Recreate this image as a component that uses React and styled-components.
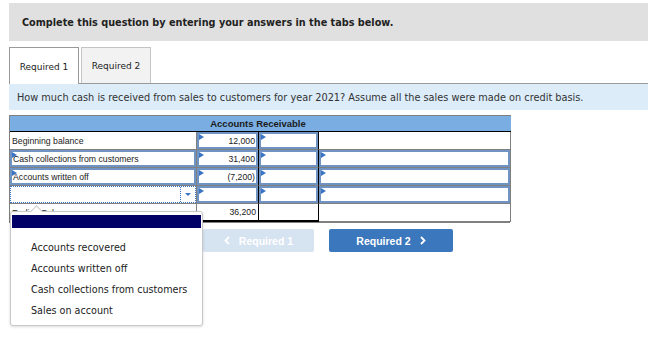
import React from 'react';
import styled, { createGlobalStyle } from 'styled-components';

const Global = createGlobalStyle`
  html, body { margin: 0; padding: 0; background: #fff; }
  body { width: 660px; height: 337px; overflow: hidden; }
`;

const Page = styled.div`
  position: relative;
  padding: 3px 12px 0 9px;
  font-family: 'DejaVu Sans', Verdana, sans-serif;
`;

const Banner = styled.div`
  height: 38px;
  background: #e0e0e0;
  display: flex;
  align-items: center;
  padding-left: 13px;
  font-size: 9.7px;
  font-weight: bold;
  color: #222;
`;

const TabBar = styled.div`
  margin-top: 6px;
  display: flex;
  gap: 2px;
  height: 36px;
  border-bottom: 1px solid #9a9a9a;
`;

const Tab = styled.div`
  width: 70px;
  box-sizing: border-box;
  display: flex;
  align-items: center;
  justify-content: center;
  font-size: 9px;
  color: #222;
  border: 1px solid ${p => (p.$active ? '#9a9a9a' : '#c4c4c4')};
  border-bottom: none;
  background: ${p => (p.$active ? '#fff' : '#f2f2f2')};
  margin-bottom: ${p => (p.$active ? '-1px' : '0')};
  padding-top: ${p => (p.$active ? '1px' : '0')};
`;

const Question = styled.div`
  height: 26px;
  background: #dcecf9;
  display: flex;
  align-items: center;
  padding-left: 8px;
  font-size: 9.75px;
  color: #333;
`;

const Table = styled.div`
  margin-top: 5px;
  width: 501px;
  display: grid;
  grid-template-columns: 187px 62px 60px 192px;
  grid-template-rows: 17px;
  grid-auto-rows: 18px;
  border: 1px solid #808080;
  border-top: none;
  box-sizing: border-box;
  font-family: 'Liberation Sans', Arial, sans-serif;
  font-size: 8.7px;
  color: #222;
`;

const HeadRow = styled.div`
  grid-column: 1 / -1;
  box-sizing: border-box;
  background: #7aaee3;
  border-top: 1px solid #808080;
  border-bottom: 1px solid #000;
  display: grid;
  grid-template-columns: 187px 122px 192px;
  font-weight: bold;
  font-size: 9.5px;
  color: #1a1a1a;
`;

const HeadTitle = styled.div`
  grid-column: 2;
  display: flex;
  align-items: center;
  justify-content: center;
`;

const Cell = styled.div`
  box-sizing: border-box;
  border-right: 1px solid ${p => (p.$dark ? '#000' : '#808080')};
  border-bottom: ${p => (p.$total ? '2px solid #000' : '1px solid #808080')};
  display: flex;
  padding: ${p => (p.$input ? '0' : '0 2px')};
  align-items: center;
  justify-content: ${p => (p.$right ? 'flex-end' : 'flex-start')};
  background: #fff;
  &:nth-child(4n + 1) { border-right-color: #808080; }
`;

const Input = styled.div`
  position: relative;
  flex: 1;
  align-self: stretch;
  box-sizing: border-box;
  border: 2px solid #6f93c2;
  display: flex;
  align-items: center;
  justify-content: ${p => (p.$right ? 'flex-end' : 'flex-start')};
  padding: 0 1px 0 1px;
  background: #fff;
`;

const Flag = styled.span`
  position: absolute;
  left: 0;
  top: 0;
  width: 0;
  height: 0;
  border-top: 3px solid transparent;
  border-bottom: 3px solid transparent;
  border-left: 5px solid #3a74c4;
`;

const Select = styled.div`
  flex: 1;
  align-self: stretch;
  box-sizing: border-box;
  border: 1px dotted #3a74c4;
  display: flex;
  justify-content: flex-end;
`;

const Caret = styled.div`
  width: 14px;
  border-left: 1px dotted #3a74c4;
  display: flex;
  align-items: center;
  justify-content: center;
  &::after {
    content: '';
    border-left: 3px solid transparent;
    border-right: 3px solid transparent;
    border-top: 3px solid #3a74c4;
  }
`;

const Popup = styled.div`
  position: absolute;
  left: 10px;
  top: 211px;
  width: 193px;
  height: 115px;
  box-sizing: border-box;
  background: #fff;
  border: 1px solid #c8c8c8;
  border-radius: 3px;
  box-shadow: 0 1px 3px rgba(0, 0, 0, 0.15);
  padding: 3px 1px 0;
  font-size: 9.6px;
  color: #222;
  &::before {
    content: '';
    position: absolute;
    left: 21px;
    top: -5px;
    width: 8px;
    height: 8px;
    background: #fff;
    border-left: 1px solid #c8c8c8;
    border-top: 1px solid #c8c8c8;
    transform: rotate(45deg);
  }
`;

const Highlight = styled.div`
  position: relative;
  height: 13px;
  margin-bottom: 9px;
  background: #000066;
`;

const Option = styled.div`
  height: 21px;
  display: flex;
  align-items: center;
  padding-left: 19px;
`;

const Nav = styled.div`
  margin-top: 6px;
  padding-left: 194px;
  display: flex;
  gap: 15px;
`;

const NavButton = styled.div`
  height: 23px;
  width: ${p => p.$w}px;
  border-radius: 2px;
  background: ${p => (p.$disabled ? '#d6e3f1' : '#3b77bd')};
  color: #fff;
  font-family: 'Liberation Sans', Arial, sans-serif;
  font-weight: bold;
  font-size: 10.5px;
  display: flex;
  align-items: center;
  justify-content: center;
  gap: 9px;
`;

const Chevron = ({ dir }) => (
  <svg width="6" height="9" viewBox="0 0 6 9">
    <path
      d={dir === 'left' ? 'M5 1 L1.5 4.5 L5 8' : 'M1 1 L4.5 4.5 L1 8'}
      fill="none"
      stroke="#fff"
      strokeWidth="1.8"
    />
  </svg>
);

const rows = [
  { label: 'Beginning balance', plainLabel: true, amount: '12,000', plainLast: true },
  { label: 'Cash collections from customers', amount: '31,400' },
  { label: 'Accounts written off', amount: '(7,200)' },
  { select: true, amount: '' },
];

const App = () => {
  return (
    <Page>
      <Global />
      <Banner>Complete this question by entering your answers in the tabs below.</Banner>
      <TabBar>
        <Tab $active>Required 1</Tab>
        <Tab>Required 2</Tab>
      </TabBar>
      <Question>
        How much cash is received from sales to customers for year 2021? Assume all the sales were made on credit basis.
      </Question>
      <Table>
        <HeadRow>
          <HeadTitle>Accounts Receivable</HeadTitle>
        </HeadRow>
        {rows.map((r, i) => (
          <React.Fragment key={i}>
            <Cell $input={!r.plainLabel}>
              {r.plainLabel ? (
                r.label
              ) : r.select ? (
                <Select>
                  <Caret />
                </Select>
              ) : (
                <Input>
                  <Flag />
                  {r.label}
                </Input>
              )}
            </Cell>
            <Cell $input $dark>
              <Input $right>
                <Flag />
                {r.amount}
              </Input>
            </Cell>
            <Cell $input $dark>
              <Input>
                <Flag />
              </Input>
            </Cell>
            <Cell $input={!r.plainLast}>
              {!r.plainLast && (
                <Input>
                  <Flag />
                </Input>
              )}
            </Cell>
          </React.Fragment>
        ))}
        <Cell>Ending Balance</Cell>
        <Cell $right $total $dark>36,200</Cell>
        <Cell $total $dark />
        <Cell />
      </Table>
      <Nav>
        <NavButton $w={111} $disabled>
          <Chevron dir="left" />
          Required 1
        </NavButton>
        <NavButton $w={124}>
          Required 2
          <Chevron dir="right" />
        </NavButton>
      </Nav>
      <Popup>
        <Highlight />
        <Option>Accounts recovered</Option>
        <Option>Accounts written off</Option>
        <Option>Cash collections from customers</Option>
        <Option>Sales on account</Option>
      </Popup>
    </Page>
  );
};

export default App;
